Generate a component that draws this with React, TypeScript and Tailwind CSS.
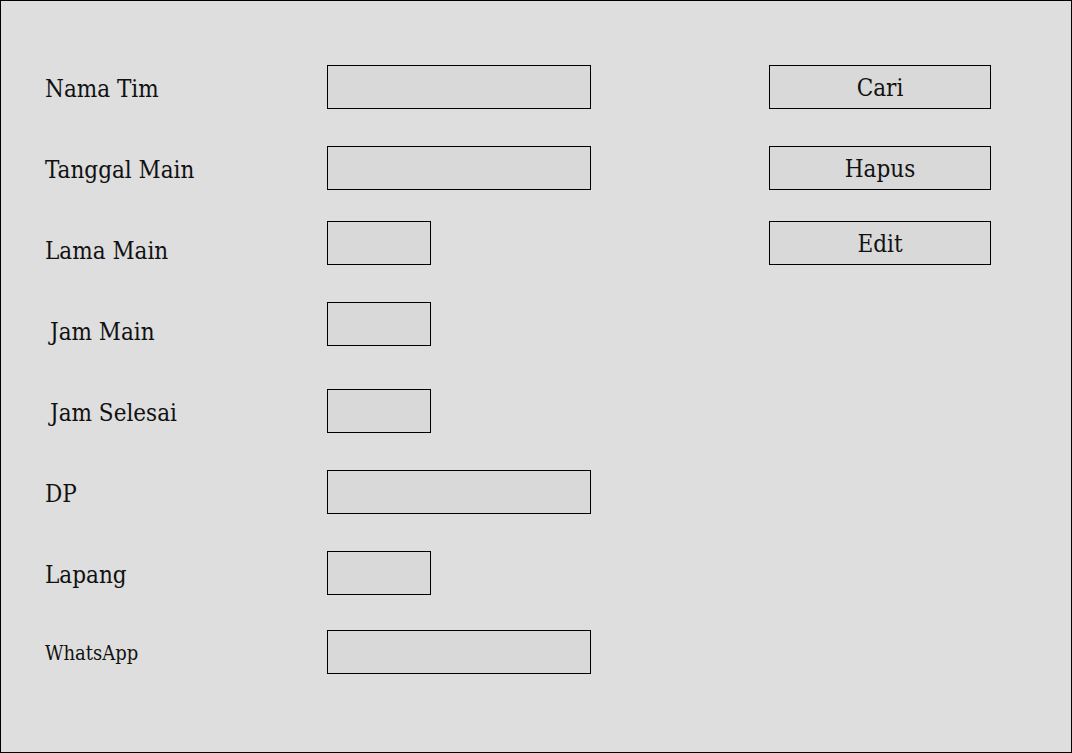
import React from "react";

const font = { fontFamily: '"DejaVu Serif Condensed", "DejaVu Serif", serif' };

const labels: { text: string; small?: boolean; indent?: boolean }[] = [
  { text: "Nama Tim" },
  { text: "Tanggal Main" },
  { text: "Lama Main" },
  { text: "Jam Main", indent: true },
  { text: "Jam Selesai", indent: true },
  { text: "DP" },
  { text: "Lapang" },
  { text: "WhatsApp", small: true },
];

const inputs: { wide: boolean; mt: string }[] = [
  { wide: true, mt: "mt-0" },
  { wide: true, mt: "mt-[37px]" },
  { wide: false, mt: "mt-[31px]" },
  { wide: false, mt: "mt-[37px]" },
  { wide: false, mt: "mt-[43px]" },
  { wide: true, mt: "mt-[37px]" },
  { wide: false, mt: "mt-[37px]" },
  { wide: true, mt: "mt-[35px]" },
];

export default function App() {
  return (
    <div
      className="w-[1072px] h-[753px] bg-[#dedede] border border-black text-[#111] flex"
      style={font}
    >
      {/* labels */}
      <div className="w-[281px] pl-[44px] pt-[47px] flex flex-col">
        {labels.map((l) => (
          <div
            key={l.text}
            className={`h-[81px] flex items-center ${l.indent ? "pl-[5px]" : ""} ${
              l.small ? "text-[20px] -mt-[3px]" : "text-[24px]"
            }`}
          >
            {l.text}
          </div>
        ))}
      </div>
      {/* inputs */}
      <div className="w-[487px] pl-[45px] pt-[64px] flex flex-col">
        {inputs.map((i, idx) => (
          <div
            key={idx}
            className={`${i.mt} h-[44px] ${
              i.wide ? "w-[264px]" : "w-[104px]"
            } bg-[#d9d9d9] border border-black`}
          />
        ))}
      </div>
      {/* buttons */}
      <div className="pt-[64px] flex flex-col">
        {["Cari", "Hapus", "Edit"].map((b, idx) => (
          <div
            key={b}
            className={`${
              idx === 0 ? "mt-0" : idx === 1 ? "mt-[37px]" : "mt-[31px]"
            } h-[44px] w-[222px] bg-[#d9d9d9] border border-black flex items-center justify-center text-[24px] pt-[2px]`}
          >
            {b}
          </div>
        ))}
      </div>
    </div>
  );
}
